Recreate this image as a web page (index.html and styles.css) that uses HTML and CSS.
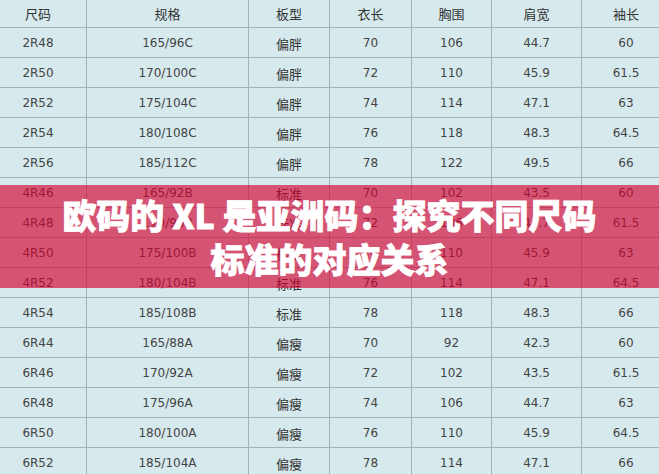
FILE: index.html
```html
<!DOCTYPE html>
<html lang="zh-CN">
<head>
<meta charset="utf-8">
<title>尺码表</title>
<link rel="stylesheet" href="styles.css">
</head>
<body>
<div class="page">
  <div class="sheet">
    <div class="cell head">尺码</div><div class="cell head">规格</div><div class="cell head">板型</div><div class="cell head">衣长</div><div class="cell head">胸围</div><div class="cell head">肩宽</div><div class="cell head">袖长</div>
    <div class="cell">2R48</div><div class="cell">165/96C</div><div class="cell cjk">偏胖</div><div class="cell">70</div><div class="cell">106</div><div class="cell">44.7</div><div class="cell">60</div>
    <div class="cell">2R50</div><div class="cell">170/100C</div><div class="cell cjk">偏胖</div><div class="cell">72</div><div class="cell">110</div><div class="cell">45.9</div><div class="cell">61.5</div>
    <div class="cell">2R52</div><div class="cell">175/104C</div><div class="cell cjk">偏胖</div><div class="cell">74</div><div class="cell">114</div><div class="cell">47.1</div><div class="cell">63</div>
    <div class="cell">2R54</div><div class="cell">180/108C</div><div class="cell cjk">偏胖</div><div class="cell">76</div><div class="cell">118</div><div class="cell">48.3</div><div class="cell">64.5</div>
    <div class="cell">2R56</div><div class="cell">185/112C</div><div class="cell cjk">偏胖</div><div class="cell">78</div><div class="cell">122</div><div class="cell">49.5</div><div class="cell">66</div>
    <div class="cell">4R46</div><div class="cell">165/92B</div><div class="cell cjk">标准</div><div class="cell">70</div><div class="cell">102</div><div class="cell">43.5</div><div class="cell">60</div>
    <div class="cell">4R48</div><div class="cell">170/96B</div><div class="cell cjk">标准</div><div class="cell">72</div><div class="cell">106</div><div class="cell">44.7</div><div class="cell">61.5</div>
    <div class="cell">4R50</div><div class="cell">175/100B</div><div class="cell cjk">标准</div><div class="cell">74</div><div class="cell">110</div><div class="cell">45.9</div><div class="cell">63</div>
    <div class="cell">4R52</div><div class="cell">180/104B</div><div class="cell cjk">标准</div><div class="cell">76</div><div class="cell">114</div><div class="cell">47.1</div><div class="cell">64.5</div>
    <div class="cell">4R54</div><div class="cell">185/108B</div><div class="cell cjk">标准</div><div class="cell">78</div><div class="cell">118</div><div class="cell">48.3</div><div class="cell">66</div>
    <div class="cell">6R44</div><div class="cell">165/88A</div><div class="cell cjk">偏瘦</div><div class="cell">70</div><div class="cell">92</div><div class="cell">42.3</div><div class="cell">60</div>
    <div class="cell">6R46</div><div class="cell">170/92A</div><div class="cell cjk">偏瘦</div><div class="cell">72</div><div class="cell">102</div><div class="cell">43.5</div><div class="cell">61.5</div>
    <div class="cell">6R48</div><div class="cell">175/96A</div><div class="cell cjk">偏瘦</div><div class="cell">74</div><div class="cell">106</div><div class="cell">44.7</div><div class="cell">63</div>
    <div class="cell">6R50</div><div class="cell">180/100A</div><div class="cell cjk">偏瘦</div><div class="cell">76</div><div class="cell">110</div><div class="cell">45.9</div><div class="cell">64.5</div>
    <div class="cell">6R52</div><div class="cell">185/104A</div><div class="cell cjk">偏瘦</div><div class="cell">78</div><div class="cell">114</div><div class="cell">47.1</div><div class="cell">66</div>
  </div>
  <div class="banner">
    <h1 class="title">欧码的 XL 是亚洲码：探究不同尺码<br>标准的对应关系</h1>
  </div>
</div>
</body>
</html>
```
FILE: styles.css
```css
html, body {
  margin: 0;
  padding: 0;
  background: #d6e9ed;
}
.page {
  position: relative;
  width: 659px;
  height: 474px;
  overflow: hidden;
}
.sheet {
  display: grid;
  grid-template-columns: 96px 161px 80px 81px 79px 89px 88px;
  grid-auto-rows: 29px;
  gap: 1px;
  background: #a3b2b6;
  width: 679px;
  margin: -2px 0 0 -10px;
}
.cell {
  background: #d6e9ed;
  color: #444;
  font-family: "DejaVu Sans", "Noto Sans CJK SC", sans-serif;
  font-size: 12px;
  display: flex;
  align-items: center;
  justify-content: center;
  padding-top: 1px;
}
.head,
.cjk {
  color: #333;
  font-size: 13px;
}
.banner {
  position: absolute;
  left: 0;
  right: 0;
  top: 185px;
  height: 103px;
  background: rgba(212, 0, 45, 0.64);
  display: flex;
  align-items: center;
  justify-content: center;
}
.title {
  margin: 0;
  color: #fff;
  font-family: "Noto Sans CJK SC", sans-serif;
  font-weight: 900;
  font-size: 34px;
  line-height: 44px;
  text-align: center;
  -webkit-text-stroke: 0.8px #fff;
}
```
